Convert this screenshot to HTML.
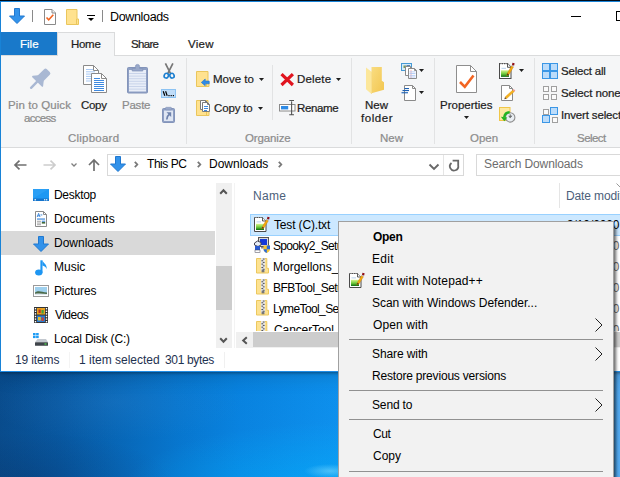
<!DOCTYPE html>
<html><head><meta charset="utf-8"><title>Downloads</title>
<style>
*{box-sizing:border-box;margin:0;padding:0}
html,body{width:620px;height:477px;overflow:hidden}
body{position:relative;font-family:"Liberation Sans",sans-serif;font-size:12px;color:#000;
background:radial-gradient(ellipse 130px 38px at 115px 402px,rgba(70,150,225,.17),transparent),radial-gradient(ellipse 140px 45px at 30px 478px,rgba(0,20,60,.18),transparent),radial-gradient(ellipse 26px 7px at 330px 471px,rgba(140,225,255,.5),transparent),radial-gradient(ellipse 220px 70px at 340px 492px,rgba(0,185,255,.5),transparent),linear-gradient(180deg,rgba(0,10,30,.06),rgba(255,255,255,.03)),linear-gradient(90deg,#02478a 0px,#01539e 60px,#0063b6 120px,#0073ce 180px,#0280e0 240px,#078eee 338px,#48a4ee 614px,#50a8f0 620px);}
.a,.t,svg{position:absolute}
.t{white-space:nowrap;line-height:14px;height:14px}
svg{overflow:visible}
#win{position:absolute;left:0;top:0;width:640px;height:372px;box-shadow:0 1px 3px rgba(0,0,0,.4),0 4px 18px rgba(0,0,0,.14);background:#fff;border-left:1px solid #1883d7;border-bottom:1px solid #1e8ce6}
#topb{position:absolute;left:0;top:0;width:620px;height:2px;background:#1883d7;border-top:1px solid #000c1a}
.vs{position:absolute;width:1px;background:#e2e3e4;top:58px;height:86px}
</style></head><body>
<div id="win"></div>
<div id="topb"></div>
<div class="t" style="left:110px;top:10px;font-size:12.5px;letter-spacing:-0.34px;">Downloads</div>
<div class="a" style="left:32px;top:10px;width:1px;height:12px;background:#8a8a8a"></div>
<div class="a" style="left:102px;top:10px;width:1px;height:12px;background:#8a8a8a"></div>
<div class="a" style="left:571px;top:16px;width:10px;height:1px;background:#000"></div>
<div class="a" style="left:616px;top:11px;width:10px;height:10px;border:1px solid #000"></div>
<svg style="left:9px;top:8px" width="16" height="16" viewBox="0 0 16 16"><path d="M5.5 0.5h5v7.5h5L8 15.5L0.5 8h5z" fill="#3292ea" stroke="#2078d0" stroke-width="1" stroke-linejoin="round"/></svg>
<svg style="left:44px;top:9px" width="12" height="16" viewBox="0 0 12 16"><path d="M0.5 0.5h7.5l3.5 3.5v11.5h-11z" fill="#fff" stroke="#8a8a8a"/><path d="M8 0.5v3.5h3.5" fill="#f0f0f0" stroke="#8a8a8a"/><path d="M2.5 8.5l2.2 2.3l4.6-5" fill="none" stroke="#f26522" stroke-width="1.6"/></svg>
<svg style="left:66px;top:9px" width="13" height="16" viewBox="0 0 13 16"><path d="M0.5 0.5h10.5v9.5h1.5v5.5h-12z" fill="#ffe28f" stroke="#eac65c"/><path d="M10.5 10v5.5" stroke="#eac65c" fill="none"/></svg>
<svg style="left:87px;top:15px" width="8" height="7" viewBox="0 0 8 7"><rect x="0" y="0" width="8" height="1" fill="#000"/><path d="M1 3h6L4 6z" fill="#000"/></svg>
<div class="a" style="left:1px;top:32px;width:56px;height:23px;background:#1979ca"></div>
<div class="t" style="left:20px;top:37px;color:#fff;font-size:11.5px;-webkit-text-stroke:.22px;">File</div>
<div class="a" style="left:1px;top:55px;width:620px;height:93px;background:#f5f6f7;border-top:1px solid #dadbdc;border-bottom:1px solid #dadbdc"></div>
<div class="a" style="left:57px;top:32px;width:58px;height:24px;background:#f5f6f7;border:1px solid #dadbdc;border-bottom:0"></div>
<div class="t" style="left:71px;top:37px;letter-spacing:-0.30px;color:#1e1e1e;font-size:11.5px;-webkit-text-stroke:.22px;">Home</div>
<div class="t" style="left:131px;top:37px;letter-spacing:-0.68px;color:#1e1e1e;font-size:11.5px;-webkit-text-stroke:.22px;">Share</div>
<div class="t" style="left:188px;top:37px;letter-spacing:0.30px;color:#1e1e1e;font-size:11.5px;-webkit-text-stroke:.22px;">View</div>
<div class="vs" style="left:186px"></div>
<div class="vs" style="left:351px"></div>
<div class="vs" style="left:434px"></div>
<div class="vs" style="left:534px"></div>
<div class="vs" style="left:272px;top:65px;height:55px"></div>
<div class="t" style="left:8px;top:98px;letter-spacing:0.08px;color:#8c8c8c;font-size:11.5px;-webkit-text-stroke:.22px;">Pin to Quick</div>
<div class="t" style="left:24px;top:111px;letter-spacing:-0.72px;color:#8c8c8c;font-size:11.5px;-webkit-text-stroke:.22px;">access</div>
<div class="t" style="left:81px;top:98px;letter-spacing:-0.30px;color:#1e1e1e;font-size:11.5px;-webkit-text-stroke:.22px;">Copy</div>
<div class="t" style="left:122px;top:98px;letter-spacing:-0.23px;color:#8c8c8c;font-size:11.5px;-webkit-text-stroke:.22px;">Paste</div>
<div class="t" style="left:68px;top:131px;letter-spacing:0.23px;color:#8c8c8c;font-size:11.5px;-webkit-text-stroke:.22px;">Clipboard</div>
<div class="t" style="left:213px;top:72px;color:#1e1e1e;font-size:11.5px;-webkit-text-stroke:.22px;">Move to</div>
<div class="t" style="left:214px;top:101px;letter-spacing:-0.15px;color:#1e1e1e;font-size:11.5px;-webkit-text-stroke:.22px;">Copy to</div>
<div class="t" style="left:297px;top:72px;letter-spacing:0.18px;color:#1e1e1e;font-size:11.5px;-webkit-text-stroke:.22px;">Delete</div>
<div class="t" style="left:297px;top:101px;letter-spacing:-0.36px;color:#1e1e1e;font-size:11.5px;-webkit-text-stroke:.22px;">Rename</div>
<div class="t" style="left:245px;top:131px;letter-spacing:-0.13px;color:#8c8c8c;font-size:11.5px;-webkit-text-stroke:.22px;">Organize</div>
<div class="t" style="left:365px;top:98px;color:#1e1e1e;font-size:11.5px;-webkit-text-stroke:.22px;">New</div>
<div class="t" style="left:361px;top:111px;letter-spacing:0.54px;color:#1e1e1e;font-size:11.5px;-webkit-text-stroke:.22px;">folder</div>
<div class="t" style="left:380px;top:131px;color:#8c8c8c;font-size:11.5px;-webkit-text-stroke:.22px;">New</div>
<div class="t" style="left:440px;top:98px;color:#1e1e1e;font-size:11.5px;-webkit-text-stroke:.22px;">Properties</div>
<div class="t" style="left:470px;top:131px;color:#8c8c8c;font-size:11.5px;-webkit-text-stroke:.22px;">Open</div>
<div class="t" style="left:561px;top:64px;letter-spacing:-0.20px;color:#1e1e1e;font-size:11.5px;-webkit-text-stroke:.22px;">Select all</div>
<div class="t" style="left:561px;top:86px;letter-spacing:-0.10px;color:#1e1e1e;font-size:11.5px;-webkit-text-stroke:.22px;">Select none</div>
<div class="t" style="left:561px;top:108px;letter-spacing:-0.16px;color:#1e1e1e;font-size:11.5px;-webkit-text-stroke:.22px;">Invert selection</div>
<div class="t" style="left:577px;top:131px;letter-spacing:-0.54px;color:#8c8c8c;font-size:11.5px;-webkit-text-stroke:.22px;">Select</div>
<svg style="left:30px;top:69px" width="21" height="21" viewBox="0 0 21 21"><g transform="translate(0.3,19.6) rotate(45)" fill="#a9b8d3"><rect x="-4" y="-25.5" width="8" height="13" rx="2"/><path d="M-4 -15h8l3.3 4.2a.8.8 0 0 1-.6 1.3h-13.4a.8.8 0 0 1-.6-1.3z"/><rect x="-1.2" y="-10.5" width="2.4" height="10.5" rx="1.1"/></g></svg>
<svg style="left:83px;top:65px" width="25" height="28" viewBox="0 0 25 28"><path d="M0.5 0.5h10l5 5v14h-15z" fill="#fff" stroke="#8a8a8a"/><path d="M10.5 0.5v5h5" fill="none" stroke="#8a8a8a"/><rect x="3" y="4.0" width="7" height="1" fill="#a9c9f3"/><rect x="3" y="6.3" width="9" height="1" fill="#a9c9f3"/><rect x="3" y="8.6" width="9" height="1" fill="#a9c9f3"/><rect x="3" y="10.9" width="9" height="1" fill="#a9c9f3"/><rect x="3" y="13.2" width="9" height="1" fill="#a9c9f3"/><rect x="3" y="15.5" width="9" height="1" fill="#a9c9f3"/><path d="M8.5 8.5h10l5 5v14h-15z" fill="#fff" stroke="#8a8a8a"/><path d="M18.5 8.5v5h5" fill="none" stroke="#8a8a8a"/><rect x="11" y="13" width="6" height="1" fill="#3f8ae0"/><rect x="11" y="15" width="10" height="1" fill="#3f8ae0"/><rect x="11" y="17" width="10" height="1" fill="#3f8ae0"/><rect x="11" y="19" width="10" height="1" fill="#3f8ae0"/><rect x="11" y="21" width="10" height="1" fill="#3f8ae0"/><rect x="11" y="23" width="10" height="1" fill="#3f8ae0"/><rect x="11" y="25" width="10" height="1" fill="#3f8ae0"/></svg>
<svg style="left:127px;top:64px" width="21" height="30" viewBox="0 0 21 30"><rect x="0.5" y="3.5" width="20" height="25.5" rx="1" fill="#8fa0c4" stroke="#8394ba"/><rect x="2" y="6" width="17" height="21.5" fill="#e9eef8"/><rect x="2" y="9.0" width="17" height="1" fill="#c9d4ea"/><rect x="2" y="11.6" width="17" height="1" fill="#c9d4ea"/><rect x="2" y="14.2" width="17" height="1" fill="#c9d4ea"/><rect x="2" y="16.8" width="17" height="1" fill="#c9d4ea"/><rect x="2" y="19.4" width="17" height="1" fill="#c9d4ea"/><rect x="2" y="22.0" width="17" height="1" fill="#c9d4ea"/><rect x="2" y="24.6" width="17" height="1" fill="#c9d4ea"/><path d="M5.2 7v-2.5h3.2v-2a1.6 1.6 0 0 1 4.2 0v2h3.2v2.5z" fill="#98a8c9" stroke="#8394ba" stroke-width=".7"/></svg>
<svg style="left:163px;top:63px" width="13" height="16" viewBox="0 0 13 16"><path d="M2.4 0.3L7.7 10.8M9.9 0.3L4.6 10.8" stroke="#777" stroke-width="1.7" fill="none"/><ellipse cx="3.3" cy="12.7" rx="2.1" ry="2.4" fill="none" stroke="#1c7fd0" stroke-width="1.6" transform="rotate(25 3.3 12.7)"/><ellipse cx="9" cy="12.7" rx="2.1" ry="2.4" fill="none" stroke="#1c7fd0" stroke-width="1.6" transform="rotate(-25 9 12.7)"/></svg>
<svg style="left:161px;top:89px" width="15" height="9" viewBox="0 0 15 9"><rect x="0.5" y="0.5" width="14" height="8" fill="#bfdcf8" stroke="#8cc3f3"/><path d="M2.2 2.2l1.6 4.6M4.6 2.2l1.6 4.6" stroke="#000" stroke-width="1.2"/><rect x="7.4" y="6" width="1.2" height="1.2" fill="#000"/><rect x="9.6" y="6" width="1.2" height="1.2" fill="#000"/><rect x="11.8" y="6" width="1.2" height="1.2" fill="#000"/></svg>
<svg style="left:162px;top:107px" width="13" height="16" viewBox="0 0 13 16"><rect x="0.5" y="1.5" width="12" height="14" rx="1" fill="#8fa0c4" stroke="#8394ba"/><rect x="2" y="3.5" width="9" height="10.5" fill="#dfe6f3"/><rect x="3.5" y="0.3" width="6" height="2.6" rx=".8" fill="#98a8c9" stroke="#8394ba" stroke-width=".6"/><path d="M9.2 5.3v4.7L4.5 5.3z" fill="#6f83ad"/><path d="M7.4 7.3Q5 9 4.8 12.5" stroke="#6f83ad" stroke-width="1.7" fill="none"/></svg>
<svg style="left:196px;top:71px" width="14" height="16" viewBox="0 0 14 16"><path d="M0.5 0.5h11.5v10.5h1v4.5h-12.5z" fill="#ffe28f" stroke="#eac65c"/><path d="M10.5 11v4.5" stroke="#eac65c" fill="none"/><path d="M5.3 11.4L9.2 8v2h4v2.8H9.2v2z" fill="#2e8be6" stroke="#1f74cc" stroke-width=".6"/></svg>
<svg style="left:196px;top:100px" width="14" height="16" viewBox="0 0 14 16"><path d="M0.5 0.5h11.5v10.5h1v4.5h-12.5z" fill="#ffe28f" stroke="#eac65c"/><path d="M10.5 11v4.5" stroke="#eac65c" fill="none"/><path d="M4.5 0.5h5l2 2v7h-7z" fill="#fff" stroke="#7b7b7b"/><path d="M9.5 0.5v2h2" fill="none" stroke="#7b7b7b"/><path d="M6.5 2.5h5l2 2v7h-7z" fill="#fff" stroke="#7b7b7b"/><path d="M11.5 2.5v2h2" fill="none" stroke="#7b7b7b"/><rect x="8" y="6" width="4" height="1" fill="#3f8ae0"/><rect x="8" y="8" width="4" height="1" fill="#3f8ae0"/><rect x="8" y="10" width="3" height="1" fill="#3f8ae0"/></svg>
<svg style="left:280px;top:73px" width="14" height="13" viewBox="0 0 14 13"><path d="M1.5 1.2L12.9 12M12.9 1.2L1.5 12" stroke="#e0141f" stroke-width="3.2" fill="none"/></svg>
<svg style="left:279px;top:100px" width="17" height="16" viewBox="0 0 17 16"><rect x="0.5" y="4.5" width="15.5" height="6.5" fill="#fff" stroke="#8a8a8a"/><rect x="2" y="6" width="7.2" height="3.4" fill="#2e8be6"/><path d="M12.6 0.8v13.6M10.2 0.5h2l.4.5l.4-.5h2M10.2 14.700h2l.4-.5l.4.5h2" stroke="#555" stroke-width="1.1" fill="none"/></svg>
<svg style="left:366px;top:67px" width="18" height="27" viewBox="0 0 18 27"><defs><linearGradient id="nf1" x1="0" y1="0" x2="1" y2="1"><stop offset="0" stop-color="#f9dc80"/><stop offset="1" stop-color="#f2c650"/></linearGradient></defs><path d="M5.5 0h10.3v13.8l2.2 1.4v7.6L5.5 26.2z" fill="url(#nf1)"/><path d="M0 0.5L5.5 4.7V27L0 22.2z" fill="#fce79b"/><path d="M5.5 4.7V27" stroke="#f6d97a" stroke-width=".6"/></svg>
<svg style="left:401px;top:63px" width="16" height="16" viewBox="0 0 16 16"><rect x="0.5" y="0.5" width="10" height="7" fill="#d4ebfa" stroke="#459ad6"/><rect x="2.5" y="2.5" width="2.5" height="2.5" fill="#7a9a5a"/><rect x="5.5" y="2.2" width="3.5" height="1.6" fill="#3a6ea8"/><path d="M4.5 3.5h5l2 2v7h-7z" fill="#fff" stroke="#8a8a8a"/><path d="M9.5 3.5v2h2" fill="none" stroke="#8a8a8a"/><path d="M7.5 5.5h6l2 2v8h-8z" fill="#fff" stroke="#8a8a8a"/><path d="M13.5 5.5v2h2" fill="none" stroke="#8a8a8a"/><rect x="9.6" y="7" width=".8" height="8" fill="#f2a0a0"/><rect x="8.5" y="8.5" width="6" height=".8" fill="#a9c4f2"/><rect x="8.5" y="10.2" width="6" height=".8" fill="#a9c4f2"/><rect x="8.5" y="11.9" width="6" height=".8" fill="#a9c4f2"/><rect x="8.5" y="13.6" width="6" height=".8" fill="#a9c4f2"/></svg>
<svg style="left:401px;top:85px" width="15" height="16" viewBox="0 0 15 16"><path d="M3.5 0.5h8l3 3v12h-11z" fill="#fff" stroke="#8a8a8a"/><path d="M11.5 0.5v3h3" fill="none" stroke="#8a8a8a"/><rect x="3.5" y="3" width="4.5" height="1.1" fill="#1a5fb4"/><rect x="1.5" y="5" width="6.5" height="1.1" fill="#1a5fb4"/><rect x="0.5" y="7.2" width="6.5" height="1.1" fill="#1a5fb4"/></svg>
<svg style="left:456px;top:65px" width="21" height="28" viewBox="0 0 21 28"><path d="M0.5 0.5h14l6 6v21h-20z" fill="#fff" stroke="#8e8e8e"/><path d="M14.5 0.5v6h6" fill="none" stroke="#8e8e8e"/><path d="M4 17l4.8 4.8L17.5 10.5" fill="none" stroke="#f26522" stroke-width="2.6"/></svg>
<svg style="left:499px;top:62px" width="17" height="17" viewBox="0 0 17 16" preserveAspectRatio="none"><path d="M0.5 1.5h8l3.5 3.5v10.5h-11.5z" fill="#fff" stroke="#4a4a4a"/><path d="M8.5 1.5v3.5h3.5" fill="#f4f4f4" stroke="#4a4a4a" stroke-width=".9"/><path d="M1.5 2.2h7" stroke="#fff" stroke-width="1.4" stroke-dasharray="1.2 1.2"/><rect x="2.5" y="5.5" width="4.5" height="0.8" fill="#a8c8e8"/><defs><linearGradient id="np499062" x1="0" y1="0" x2="0" y2="1"><stop offset="0" stop-color="#d6f58c"/><stop offset=".55" stop-color="#6cc93a"/><stop offset="1" stop-color="#0c6a10"/></linearGradient></defs><rect x="2" y="7.8" width="8" height="6.2" fill="url(#np499062)"/><path d="M7.6 13L8.3 10.7L12.6 3.6l1.8 1.1L10.1 11.8z" fill="#f5a80c" stroke="#c07a08" stroke-width=".4"/><path d="M12.6 3.6l.5-.8l1.8 1.1l-.5.8z" fill="#b8c4d4"/><rect x="13.2" y="1" width="2.2" height="2.2" fill="#8e0a12" transform="rotate(12 14.3 2.1)"/><path d="M7.6 13L8.3 10.7l1.8 1.1z" fill="#5a3a1a"/></svg>
<svg style="left:501px;top:85px" width="15" height="16" viewBox="0 0 15 16"><path d="M0.5 0.5h8l3 3v12h-11z" fill="#fff" stroke="#8a8a8a"/><path d="M8.5 0.5v3h3" fill="none" stroke="#8a8a8a"/><path d="M4.06 12.03L5.54 13.67L13.34 6.62L11.86 4.98z" fill="#f5b21e" stroke="#d9951a" stroke-width=".4"/><path d="M11.86 4.98L13.34 6.62L14.3 5.75L12.8 4.1z" fill="#f28b8b"/><path d="M3.3 14.2L4.06 12.03L5.54 13.67z" fill="#6b4a2a"/></svg>
<svg style="left:499px;top:107px" width="17" height="16" viewBox="0 0 17 16"><rect x="0.5" y="0.5" width="10.5" height="13" fill="#fde9a2" stroke="#f0c648"/><circle cx="11.2" cy="10.4" r="4.7" fill="#e9eef3" stroke="#8e8e8e" stroke-width="1.1"/><path d="M11.2 7.4v3l1.9-1.7M9.6 9.2l1.6 1.2" stroke="#333" stroke-width=".8" fill="none"/><path d="M10.6 5.3C7.8 5.3 5.6 7.3 5.2 10.3" stroke="#22b422" stroke-width="2.4" fill="none"/><path d="M1.9 9.8L8.3 10.6L5.3 14.2z" fill="#22b422"/></svg>
<svg style="left:542px;top:63px" width="16" height="16" viewBox="0 0 16 16"><rect x="0.5" y="0.5" width="7" height="7" fill="#bcdcfa" stroke="#3b97e6"/><rect x="0.5" y="8.5" width="7" height="7" fill="#bcdcfa" stroke="#3b97e6"/><rect x="8.5" y="0.5" width="7" height="7" fill="#bcdcfa" stroke="#3b97e6"/><rect x="8.5" y="8.5" width="7" height="7" fill="#bcdcfa" stroke="#3b97e6"/></svg>
<svg style="left:542px;top:85px" width="16" height="16" viewBox="0 0 16 16"><rect x="1.5" y="1.5" width="5" height="5" fill="#fbfbfb" stroke="#a0a0a0"/><rect x="9.5" y="1.5" width="5" height="5" fill="#fbfbfb" stroke="#a0a0a0"/><rect x="1.5" y="9.5" width="5" height="5" fill="#fbfbfb" stroke="#a0a0a0"/><rect x="9.5" y="9.5" width="5" height="5" fill="#fbfbfb" stroke="#a0a0a0"/></svg>
<svg style="left:542px;top:107px" width="16" height="16" viewBox="0 0 16 16"><rect x="1.5" y="2.5" width="5" height="5" fill="#fbfbfb" stroke="#a0a0a0"/><rect x="10.5" y="10.5" width="5" height="5" fill="#fbfbfb" stroke="#a0a0a0"/><rect x="8.5" y="0.5" width="7" height="7" fill="#bcdcfa" stroke="#3b97e6"/><rect x="0.5" y="8.5" width="7" height="7" fill="#bcdcfa" stroke="#3b97e6"/></svg>
<svg style="left:259px;top:78px" width="5" height="3" viewBox="0 0 5 3"><path d="M0 0h5L2.5 3z" fill="#1e1e1e"/></svg>
<svg style="left:258px;top:107px" width="5" height="3" viewBox="0 0 5 3"><path d="M0 0h5L2.5 3z" fill="#1e1e1e"/></svg>
<svg style="left:336px;top:78px" width="5" height="3" viewBox="0 0 5 3"><path d="M0 0h5L2.5 3z" fill="#1e1e1e"/></svg>
<svg style="left:419px;top:69px" width="5" height="3" viewBox="0 0 5 3"><path d="M0 0h5L2.5 3z" fill="#1e1e1e"/></svg>
<svg style="left:419px;top:91px" width="5" height="3" viewBox="0 0 5 3"><path d="M0 0h5L2.5 3z" fill="#1e1e1e"/></svg>
<svg style="left:464px;top:115.5px" width="5" height="3" viewBox="0 0 5 3"><path d="M0 0h5L2.5 3z" fill="#1e1e1e"/></svg>
<svg style="left:519px;top:69px" width="5" height="3" viewBox="0 0 5 3"><path d="M0 0h5L2.5 3z" fill="#1e1e1e"/></svg>
<div class="a" style="left:107px;top:154px;width:357px;height:22px;border:1px solid #d9d9d9;background:#fff"></div>
<div class="a" style="left:443px;top:155px;width:1px;height:20px;background:#e5e5e5"></div>
<div class="a" style="left:476px;top:154px;width:160px;height:22px;border:1px solid #d9d9d9;background:#fff"></div>
<svg style="left:14px;top:160px" width="13" height="10" viewBox="0 0 13 10"><path d="M12.5 5H1.2M5.5 0.6L1 5l4.5 4.4" fill="none" stroke="#707070" stroke-width="1.7"/></svg>
<svg style="left:43px;top:160px" width="13" height="10" viewBox="0 0 13 10"><path d="M0.5 5h11.3M7.5 0.6L12 5l-4.5 4.4" fill="none" stroke="#cdcdcd" stroke-width="1.7"/></svg>
<svg style="left:70.5px;top:163px" width="6" height="3.6" viewBox="0 0 6 3.6"><path d="M0.5 0.5L3.0 3.0L5.5 0.5" fill="none" stroke="#808080" stroke-width="1.3"/></svg>
<svg style="left:88px;top:159px" width="12" height="12" viewBox="0 0 12 12"><path d="M6 12V1.2M1 6L6 1l5 5" fill="none" stroke="#707070" stroke-width="1.7"/></svg>
<svg style="left:110px;top:156px" width="16" height="16" viewBox="0 0 16 16"><path d="M5.5 0.5h5v7.5h5L8 15.5L0.5 8h5z" fill="#3292ea" stroke="#2078d0" stroke-width="1" stroke-linejoin="round"/></svg>
<svg style="left:134px;top:161px" width="4" height="7" viewBox="0 0 4 7"><path d="M0.8 0.8L3.3 3.5L0.8 6.2" fill="none" stroke="#787878" stroke-width="1.8"/></svg>
<svg style="left:197px;top:161px" width="4" height="7" viewBox="0 0 4 7"><path d="M0.8 0.8L3.3 3.5L0.8 6.2" fill="none" stroke="#787878" stroke-width="1.8"/></svg>
<svg style="left:278px;top:161px" width="4" height="7" viewBox="0 0 4 7"><path d="M0.8 0.8L3.3 3.5L0.8 6.2" fill="none" stroke="#787878" stroke-width="1.8"/></svg>
<svg style="left:429px;top:164px" width="10" height="5.6" viewBox="0 0 10 5.6"><path d="M0.5 0.5L5.0 5.0L9.5 0.5" fill="none" stroke="#686868" stroke-width="1.9"/></svg>
<svg style="left:448px;top:159px" width="12" height="13" viewBox="0 0 12 13"><path d="M4.6 1.7H10.2V6.4A4.2 4.2 0 1 1 3.5 4" fill="none" stroke="#686868" stroke-width="1.8"/></svg>
<div class="t" style="left:147px;top:157px;letter-spacing:-0.45px;">This PC</div>
<div class="t" style="left:209px;top:157px;">Downloads</div>
<div class="t" style="left:484px;top:157px;letter-spacing:-0.12px;color:#6d6d6d;">Search Downloads</div>
<div class="a" style="left:1px;top:231px;width:214px;height:24px;background:#d9d9d9"></div>
<div class="t" style="left:54px;top:188px;letter-spacing:-0.30px;">Desktop</div>
<div class="t" style="left:54px;top:212px;">Documents</div>
<div class="t" style="left:54px;top:236px;">Downloads</div>
<div class="t" style="left:54px;top:260px;">Music</div>
<div class="t" style="left:54px;top:284px;letter-spacing:-0.13px;">Pictures</div>
<div class="t" style="left:55px;top:308px;letter-spacing:-0.54px;">Videos</div>
<div class="t" style="left:54px;top:332px;letter-spacing:-0.19px;">Local Disk (C:)</div>
<svg style="left:33px;top:189px" width="16" height="12" viewBox="0 0 16 12"><rect x="0" y="0" width="16" height="12" fill="#1e98f3"/><path d="M0 0h16L0 9.5z" fill="#3aa8f8" opacity=".45"/><rect x="0" y="9.5" width="16" height="2.5" fill="#1474cc"/><rect x="1.5" y="10.2" width="1.5" height="1.2" fill="#fff"/><rect x="11" y="10.2" width="1.3" height="1.2" fill="#fff"/><rect x="13" y="10.2" width="1.3" height="1.2" fill="#fff"/></svg>
<svg style="left:35px;top:211px" width="12" height="16" viewBox="0 0 12 16"><path d="M0.5 0.5h8l3 3v12h-11z" fill="#fff" stroke="#8a8a8a"/><path d="M8.5 0.5v3h3" fill="none" stroke="#8a8a8a"/><path d="M2.2 6l1.4-3.6L5 6M2.7 4.8h1.8" stroke="#2f7fd8" stroke-width=".9" fill="none"/><rect x="5.5" y="3.5" width="1.8" height=".9" fill="#2f7fd8"/><rect x="2" y="7.5" width="8" height="1.1" fill="#2f7fd8"/><rect x="2" y="9.8" width="4" height=".9" fill="#9a9a9a"/><rect x="2" y="11.6" width="4" height=".9" fill="#9a9a9a"/><rect x="2" y="13.3" width="4" height=".9" fill="#9a9a9a"/><rect x="6.8" y="9.6" width="3.4" height="1.4" fill="#6aa0e0"/><rect x="6.8" y="11" width="3.4" height="1.6" fill="#3f6a3a"/></svg>
<svg style="left:33px;top:236px" width="16" height="16" viewBox="0 0 16 16"><path d="M5.5 0.5h5v7.5h5L8 15.5L0.5 8h5z" fill="#3292ea" stroke="#2078d0" stroke-width="1" stroke-linejoin="round"/></svg>
<svg style="left:35px;top:260px" width="12" height="16" viewBox="0 0 12 16"><ellipse cx="3.8" cy="12.4" rx="3.7" ry="3" fill="#1e96f2"/><rect x="5.4" y="0.3" width="2.1" height="12.5" fill="#1e96f2"/><path d="M7.4 0.3c.5 2.8 4.8 3.6 4.3 9c-.5-2.6-2.5-3.4-4.3-3.9z" fill="#1e96f2"/></svg>
<svg style="left:33px;top:285px" width="16" height="12" viewBox="0 0 16 12"><rect x="0.5" y="0.5" width="15" height="11" fill="#fff" stroke="#9a9a9a"/><rect x="2" y="2" width="12" height="8" fill="#9fd0ee"/><path d="M2 7.5c3-2.5 6-1 12 0V10H2z" fill="#4a6a4a"/><path d="M2 8.8c4-.8 8-.2 12 .2V10H2z" fill="#dfe8ef"/></svg>
<svg style="left:34px;top:307px" width="14" height="16" viewBox="0 0 14 16"><rect x="0" y="0" width="14" height="16" fill="#333"/><rect x="3" y="1" width="8" height="6.5" fill="#e9a21e"/><rect x="3" y="8.5" width="8" height="6.5" fill="#2a7ad0"/><rect x="4.5" y="2.5" width="2.2" height="3.5" fill="#c03020"/><rect x="7.5" y="3" width="2.2" height="3.5" fill="#40a040"/><rect x="4" y="10" width="2.8" height="3.5" fill="#e0c030"/><rect x="7.5" y="10.5" width="2.2" height="3.5" fill="#d04030"/><rect x="0.8" y="1.0" width="1.4" height="1.4" fill="#fff"/><rect x="11.8" y="1.0" width="1.4" height="1.4" fill="#fff"/><rect x="0.8" y="3.6" width="1.4" height="1.4" fill="#fff"/><rect x="11.8" y="3.6" width="1.4" height="1.4" fill="#fff"/><rect x="0.8" y="6.2" width="1.4" height="1.4" fill="#fff"/><rect x="11.8" y="6.2" width="1.4" height="1.4" fill="#fff"/><rect x="0.8" y="8.8" width="1.4" height="1.4" fill="#fff"/><rect x="11.8" y="8.8" width="1.4" height="1.4" fill="#fff"/><rect x="0.8" y="11.4" width="1.4" height="1.4" fill="#fff"/><rect x="11.8" y="11.4" width="1.4" height="1.4" fill="#fff"/><rect x="0.8" y="14.0" width="1.4" height="1.4" fill="#fff"/><rect x="11.8" y="14.0" width="1.4" height="1.4" fill="#fff"/></svg>
<svg style="left:33px;top:333px" width="16" height="13" viewBox="0 0 16 13"><rect x="0" y="0" width="2.6" height="2.3" fill="#1e9cf4"/><rect x="3.1" y="0" width="2.6" height="2.3" fill="#1e9cf4"/><rect x="0" y="2.8" width="2.6" height="2.3" fill="#1e9cf4"/><rect x="3.1" y="2.8" width="2.6" height="2.3" fill="#1e9cf4"/><path d="M4.5 6h8.5l2 3.2H2z" fill="#c3c8cf"/><rect x="2" y="9.2" width="13" height="3.6" rx=".5" fill="#3f444a"/><rect x="11.5" y="10.4" width="2" height="1.2" fill="#4ce04c"/></svg>
<div class="a" style="left:216px;top:183px;width:16px;height:165px;background:#f0f0f0"></div>
<div class="a" style="left:216px;top:266px;width:16px;height:44px;background:#cdcdcd"></div>
<div class="a" style="left:234px;top:183px;width:1px;height:165px;background:#f3f3f3"></div>
<svg style="left:219px;top:188px" width="9" height="7" viewBox="0 0 9 7"><path d="M1.2 5.8L4.5 2.2L7.8 5.8" fill="none" stroke="#555" stroke-width="2"/></svg>
<svg style="left:219px;top:336.5px" width="9" height="7" viewBox="0 0 9 7"><path d="M1.2 1.2L4.5 4.8L7.8 1.200" fill="none" stroke="#555" stroke-width="2"/></svg>
<svg style="left:616px;top:183px" width="8" height="5" viewBox="0 0 8 5"><path d="M0.5 0.5L4 4L7.5 0.5" fill="none" stroke="#9a9a9a" stroke-width="1"/></svg>
<div class="t" style="left:253px;top:189px;letter-spacing:0.30px;color:#4c607a;">Name</div>
<div class="t" style="left:566px;top:189px;letter-spacing:-0.13px;color:#4c607a;">Date modified</div>
<div class="a" style="left:559px;top:183px;width:1px;height:25px;background:#e5e5e5"></div>
<div class="a" style="left:250px;top:214px;width:380px;height:22px;background:#cce8ff;border:1px solid #99d1ff"></div>
<div class="t" style="left:274px;top:218px;letter-spacing:-0.16px;">Test (C).txt</div>
<div class="t" style="left:273px;top:239px;letter-spacing:-0.70px;">Spooky2_Setup</div>
<div class="t" style="left:273px;top:260px;">Morgellons_Setup</div>
<div class="t" style="left:273px;top:281px;letter-spacing:-0.54px;">BFBTool_Setup</div>
<div class="t" style="left:273px;top:302px;letter-spacing:-0.60px;">LymeTool_Setup</div>
<div class="t" style="left:274px;top:323px;letter-spacing:-0.10px;">CancerTool_Setup</div>
<div class="t" style="left:567px;top:218px;letter-spacing:-0.11px;">3/10/2020 10:42 AM</div>
<div class="t" style="left:567px;top:239px;letter-spacing:-0.11px;color:#6d6d6d;">2/27/2020 4:15 PM</div>
<div class="t" style="left:567px;top:260px;letter-spacing:-0.11px;color:#6d6d6d;">2/27/2020 4:10 PM</div>
<div class="t" style="left:567px;top:281px;letter-spacing:-0.11px;color:#6d6d6d;">2/27/2020 4:05 PM</div>
<div class="t" style="left:567px;top:302px;letter-spacing:-0.11px;color:#6d6d6d;">2/27/2020 4:01 PM</div>
<div class="t" style="left:567px;top:323px;letter-spacing:-0.11px;color:#6d6d6d;">2/27/2020 3:51 PM</div>
<svg style="left:254px;top:216px" width="17" height="16" viewBox="0 0 17 16" preserveAspectRatio="none"><path d="M0.5 1.5h8l3.5 3.5v10.5h-11.5z" fill="#fff" stroke="#4a4a4a"/><path d="M8.5 1.5v3.5h3.5" fill="#f4f4f4" stroke="#4a4a4a" stroke-width=".9"/><path d="M1.5 2.2h7" stroke="#fff" stroke-width="1.4" stroke-dasharray="1.2 1.2"/><rect x="2.5" y="5.5" width="4.5" height="0.8" fill="#a8c8e8"/><defs><linearGradient id="np254216" x1="0" y1="0" x2="0" y2="1"><stop offset="0" stop-color="#d6f58c"/><stop offset=".55" stop-color="#6cc93a"/><stop offset="1" stop-color="#0c6a10"/></linearGradient></defs><rect x="2" y="7.8" width="8" height="6.2" fill="url(#np254216)"/><path d="M7.6 13L8.3 10.7L12.6 3.6l1.8 1.1L10.1 11.8z" fill="#f5a80c" stroke="#c07a08" stroke-width=".4"/><path d="M12.6 3.6l.5-.8l1.8 1.1l-.5.8z" fill="#b8c4d4"/><rect x="13.2" y="1" width="2.2" height="2.2" fill="#8e0a12" transform="rotate(12 14.3 2.1)"/><path d="M7.6 13L8.3 10.7l1.8 1.1z" fill="#5a3a1a"/></svg>
<svg style="left:254px;top:237px" width="16" height="16" viewBox="0 0 16 16"><rect x="4.5" y="0.5" width="10" height="9" fill="#d8d8d8" stroke="#555"/><rect x="6" y="2" width="7" height="6" fill="#1438d8"/><rect x="7" y="10" width="6" height="1.5" fill="#888"/><path d="M0.5 6l3-2l3.5 1.5v2.5l-3 1.5l-3.5-1.5z" fill="#e8eef8" stroke="#445"/><rect x="1" y="9" width="5" height="4" fill="#2a5ad0"/><rect x="1" y="13" width="5" height="2.5" fill="#fff" stroke="#445" stroke-width=".5"/><path d="M9.5 8.5h6.5v3.5c0 2-1.6 3.3-3.2 4c-1.7-.7-3.3-2-3.3-4z" fill="#f4c430"/><path d="M12.8 8.5h3.2v3.7h-3.2zM9.5 12.2h3.3v3.8c-1.7-.7-3.2-1.9-3.3-3.8z" fill="#2a6ad8"/></svg>
<svg style="left:256px;top:258px" width="13" height="16" viewBox="0 0 13 16"><path d="M0.5 0.5h10.3v9.8h1.7v4.7h-12z" fill="#fde291" stroke="#ecc85e"/><rect x="5" y="0" width="4" height="13" fill="#e8e8e8"/><rect x="6.8" y="0.5" width="1.8" height="1.1" fill="#5a5a5a"/><rect x="5.4" y="2.2" width="1.8" height="1.1" fill="#5a5a5a"/><rect x="6.8" y="3.9" width="1.8" height="1.1" fill="#5a5a5a"/><rect x="5.4" y="5.6" width="1.8" height="1.1" fill="#5a5a5a"/><rect x="6.8" y="7.3" width="1.8" height="1.1" fill="#5a5a5a"/><rect x="5.4" y="9.0" width="1.8" height="1.1" fill="#5a5a5a"/><rect x="6.8" y="10.7" width="1.8" height="1.1" fill="#5a5a5a"/><rect x="5.6" y="11.5" width="2.8" height="2.8" fill="#777"/></svg>
<svg style="left:256px;top:279px" width="13" height="16" viewBox="0 0 13 16"><path d="M0.5 0.5h10.3v9.8h1.7v4.7h-12z" fill="#fde291" stroke="#ecc85e"/><rect x="5" y="0" width="4" height="13" fill="#e8e8e8"/><rect x="6.8" y="0.5" width="1.8" height="1.1" fill="#5a5a5a"/><rect x="5.4" y="2.2" width="1.8" height="1.1" fill="#5a5a5a"/><rect x="6.8" y="3.9" width="1.8" height="1.1" fill="#5a5a5a"/><rect x="5.4" y="5.6" width="1.8" height="1.1" fill="#5a5a5a"/><rect x="6.8" y="7.3" width="1.8" height="1.1" fill="#5a5a5a"/><rect x="5.4" y="9.0" width="1.8" height="1.1" fill="#5a5a5a"/><rect x="6.8" y="10.7" width="1.8" height="1.1" fill="#5a5a5a"/><rect x="5.6" y="11.5" width="2.8" height="2.8" fill="#777"/></svg>
<svg style="left:256px;top:300px" width="13" height="16" viewBox="0 0 13 16"><path d="M0.5 0.5h10.3v9.8h1.7v4.7h-12z" fill="#fde291" stroke="#ecc85e"/><rect x="5" y="0" width="4" height="13" fill="#e8e8e8"/><rect x="6.8" y="0.5" width="1.8" height="1.1" fill="#5a5a5a"/><rect x="5.4" y="2.2" width="1.8" height="1.1" fill="#5a5a5a"/><rect x="6.8" y="3.9" width="1.8" height="1.1" fill="#5a5a5a"/><rect x="5.4" y="5.6" width="1.8" height="1.1" fill="#5a5a5a"/><rect x="6.8" y="7.3" width="1.8" height="1.1" fill="#5a5a5a"/><rect x="5.4" y="9.0" width="1.8" height="1.1" fill="#5a5a5a"/><rect x="6.8" y="10.7" width="1.8" height="1.1" fill="#5a5a5a"/><rect x="5.6" y="11.5" width="2.8" height="2.8" fill="#777"/></svg>
<svg style="left:256px;top:321px" width="13" height="10" viewBox="0 0 13 10"><path d="M0.5 0.5h10.3v9.8h1.7v4.7h-12z" fill="#fde291" stroke="#ecc85e"/><rect x="5" y="0" width="4" height="13" fill="#e8e8e8"/><rect x="6.8" y="0.5" width="1.8" height="1.1" fill="#5a5a5a"/><rect x="5.4" y="2.2" width="1.8" height="1.1" fill="#5a5a5a"/><rect x="6.8" y="3.9" width="1.8" height="1.1" fill="#5a5a5a"/><rect x="5.4" y="5.6" width="1.8" height="1.1" fill="#5a5a5a"/><rect x="6.8" y="7.3" width="1.8" height="1.1" fill="#5a5a5a"/><rect x="5.4" y="9.0" width="1.8" height="1.1" fill="#5a5a5a"/><rect x="6.8" y="10.7" width="1.8" height="1.1" fill="#5a5a5a"/><rect x="5.6" y="11.5" width="2.8" height="2.8" fill="#777"/></svg>
<div class="a" style="left:236px;top:331px;width:400px;height:1px;background:#fff"></div>
<div class="a" style="left:236px;top:332px;width:400px;height:16px;background:#f0f0f0"></div>
<div class="a" style="left:253px;top:332px;width:400px;height:15px;background:#cdcdcd"></div>
<svg style="left:240.5px;top:335.5px" width="7" height="9" viewBox="0 0 7 9"><path d="M5.8 1.2L2.2 4.5L5.8 7.800" fill="none" stroke="#555" stroke-width="2"/></svg>
<div class="a" style="left:1px;top:348px;width:620px;height:23px;background:#fff"></div>
<div class="t" style="left:15px;top:353px;letter-spacing:-0.13px;color:#1e3250;">19 items</div>
<div class="t" style="left:79px;top:353px;color:#1e3250;">1 item selected</div>
<div class="t" style="left:165px;top:353px;letter-spacing:-0.34px;color:#1e3250;">301 bytes</div>
<div class="a" style="left:69px;top:352px;width:1px;height:16px;background:#f4f4f4"></div>
<div class="a" style="left:224px;top:352px;width:1px;height:16px;background:#f0f0f0"></div>
<div class="a" style="left:338px;top:221px;width:276px;height:270px;background:#f2f2f2;border:1px solid #a0a0a0;box-shadow:3px 4px 3px -1px rgba(0,0,0,.6)"></div>
<div class="a" style="left:349px;top:339px;width:254px;height:1px;background:#919191"></div>
<div class="a" style="left:349px;top:390px;width:254px;height:1px;background:#919191"></div>
<div class="a" style="left:349px;top:419px;width:254px;height:1px;background:#919191"></div>
<div class="a" style="left:349px;top:471px;width:254px;height:1px;background:#919191"></div>
<svg style="left:349px;top:272px" width="17" height="16" viewBox="0 0 17 16" preserveAspectRatio="none"><path d="M0.5 1.5h8l3.5 3.5v10.5h-11.5z" fill="#fff" stroke="#4a4a4a"/><path d="M8.5 1.5v3.5h3.5" fill="#f4f4f4" stroke="#4a4a4a" stroke-width=".9"/><path d="M1.5 2.2h7" stroke="#fff" stroke-width="1.4" stroke-dasharray="1.2 1.2"/><rect x="2.5" y="5.5" width="4.5" height="0.8" fill="#a8c8e8"/><defs><linearGradient id="np349272" x1="0" y1="0" x2="0" y2="1"><stop offset="0" stop-color="#d6f58c"/><stop offset=".55" stop-color="#6cc93a"/><stop offset="1" stop-color="#0c6a10"/></linearGradient></defs><rect x="2" y="7.8" width="8" height="6.2" fill="url(#np349272)"/><path d="M7.6 13L8.3 10.7L12.6 3.6l1.8 1.1L10.1 11.8z" fill="#f5a80c" stroke="#c07a08" stroke-width=".4"/><path d="M12.6 3.6l.5-.8l1.8 1.1l-.5.8z" fill="#b8c4d4"/><rect x="13.2" y="1" width="2.2" height="2.2" fill="#8e0a12" transform="rotate(12 14.3 2.1)"/><path d="M7.6 13L8.3 10.7l1.8 1.1z" fill="#5a3a1a"/></svg>
<div class="t" style="left:373px;top:230px;letter-spacing:-0.30px;font-weight:bold;">Open</div>
<div class="t" style="left:372px;top:252px;letter-spacing:0.30px;">Edit</div>
<div class="t" style="left:372px;top:274px;letter-spacing:0.15px;">Edit with Notepad++</div>
<div class="t" style="left:372px;top:296px;letter-spacing:-0.03px;">Scan with Windows Defender...</div>
<div class="t" style="left:373px;top:318px;letter-spacing:0.11px;">Open with</div>
<div class="t" style="left:372px;top:347px;letter-spacing:-0.10px;">Share with</div>
<div class="t" style="left:372px;top:369px;letter-spacing:-0.19px;">Restore previous versions</div>
<div class="t" style="left:372px;top:398px;letter-spacing:-0.15px;">Send to</div>
<div class="t" style="left:373px;top:427px;letter-spacing:-0.45px;">Cut</div>
<div class="t" style="left:373px;top:449px;">Copy</div>
<svg style="left:595px;top:318px" width="8" height="14" viewBox="0 0 8 14"><path d="M0.5 0.5L7 7L0.5 13.5" fill="none" stroke="#222" stroke-width="1"/></svg>
<svg style="left:595px;top:347px" width="8" height="14" viewBox="0 0 8 14"><path d="M0.5 0.5L7 7L0.5 13.5" fill="none" stroke="#222" stroke-width="1"/></svg>
<svg style="left:595px;top:398px" width="8" height="14" viewBox="0 0 8 14"><path d="M0.5 0.5L7 7L0.5 13.5" fill="none" stroke="#222" stroke-width="1"/></svg>
</body></html>
